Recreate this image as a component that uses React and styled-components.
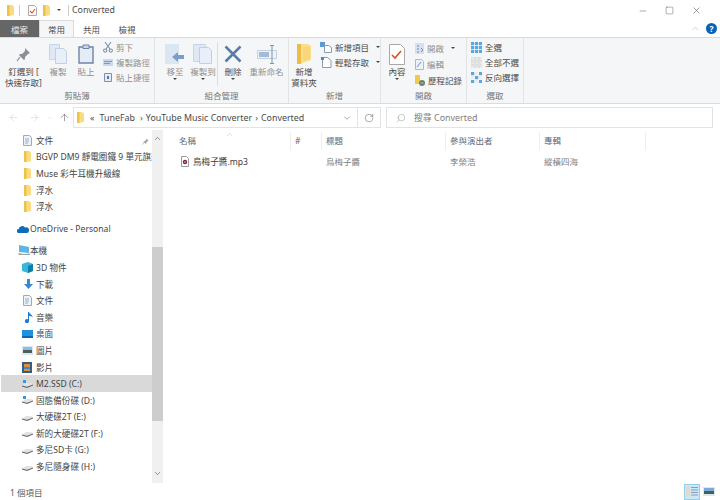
import React from 'react';
import styled, { createGlobalStyle } from 'styled-components';
import { ArrowLeft, ArrowRight, ArrowUp, ChevronDown, ChevronUp, Minus, RotateCw, Search, Square, X } from 'lucide-react';

const GlobalStyle = createGlobalStyle`
  html, body {
    margin: 0;
    width: 720px;
    height: 500px;
    overflow: hidden;
    background: #fff;
    font-family: "Noto Sans", "Noto Sans CJK TC", sans-serif;
    font-size: 9px;
    color: #333;
  }
  * { box-sizing: border-box; }
  svg { flex-shrink: 0; }
`;

const Window = styled.div`
  width: 720px;
  height: 500px;
  display: flex;
  flex-direction: column;
`;

const TitleBar = styled.div`
  height: 20px;
  display: flex;
  align-items: center;
  padding-left: 7px;
`;

const Sep = styled.span`
  width: 1px;
  height: 11px;
  background: #ccc;
  margin: 0 ${(p) => p.$r}px 0 ${(p) => p.$l}px;
`;

const QuickSlot = styled.span`
  display: flex;
  margin-left: ${(p) => p.$ml || 0}px;
`;

const TitleText = styled.span`
  font-size: 8.8px;
  color: #4a4a4a;
`;

const WinButtons = styled.div`
  margin-left: auto;
  display: flex;
  align-items: center;
  gap: 17px;
  padding-right: 18px;
  padding-top: 1px;
  color: #333;
`;

const TabBar = styled.div`
  height: 17px;
  display: flex;
  align-items: stretch;
  position: relative;
  z-index: 1;
`;

const Tab = styled.div`
  width: ${(p) => p.$w}px;
  display: flex;
  align-items: center;
  justify-content: center;
  font-size: 8.5px;
  color: ${(p) => (p.$file ? '#e8e8e8' : '#4a4a4a')};
  background: ${(p) => (p.$file ? '#666' : p.$active ? '#f5f6f7' : 'transparent')};
  border: ${(p) => (p.$active ? '1px solid #dadbdc' : 'none')};
  border-bottom: none;
`;

const TabRight = styled.div`
  margin-left: auto;
  display: flex;
  align-items: center;
  gap: 5px;
  padding-right: 3px;
  color: #999;
`;

const HelpBadge = styled.span`
  width: 11px;
  height: 11px;
  border-radius: 50%;
  background: #0a62b8;
  color: #fff;
  font-size: 8.5px;
  font-weight: 700;
  line-height: 11px;
  text-align: center;
`;

const Ribbon = styled.div`
  height: 67px;
  background: #f5f6f7;
  border-top: 1px solid #dadbdc;
  border-bottom: 1px solid #dadbdc;
  display: flex;
`;

const Group = styled.div`
  width: ${(p) => p.$w}px;
  border-right: ${(p) => (p.$last ? 'none' : '1px solid #e2e3e4')};
  display: flex;
  flex-direction: column;
`;

const GroupBody = styled.div`
  height: 52px;
  display: flex;
  padding-left: ${(p) => p.$pl || 0}px;
`;

const GroupLabel = styled.div`
  text-align: center;
  color: #777;
  font-size: 8.5px;
  line-height: 14px;
`;

const BigButton = styled.div`
  width: ${(p) => p.$w}px;
  padding-top: 4px;
  display: flex;
  flex-direction: column;
  align-items: center;
  text-align: center;
  line-height: 11px;
  font-size: 8.5px;
  color: ${(p) => (p.$off ? '#909090' : '#4a4a4a')};
  white-space: nowrap;
`;

const BigIcon = styled.div`
  height: 24px;
  display: flex;
  align-items: center;
`;

const Caret = styled.span`
  display: block;
  width: 0;
  height: 0;
  border-left: 2px solid transparent;
  border-right: 2px solid transparent;
  border-top: 2px solid #444;
  margin: ${(p) => (p.$inline ? `0 0 0 ${p.$ml || 4}px` : '1px auto 0')};
`;

const SmallStack = styled.div`
  display: flex;
  flex-direction: column;
  gap: ${(p) => p.$gap || 3}px;
  padding-top: ${(p) => p.$pt || 3}px;
  margin-left: ${(p) => p.$ml || 0}px;
`;

const SmallButton = styled.div`
  height: 12px;
  display: flex;
  align-items: center;
  gap: 3px;
  font-size: 8.5px;
  color: ${(p) => (p.$off ? '#909090' : '#4a4a4a')};
  white-space: nowrap;
`;

const VRule = styled.span`
  width: 1px;
  height: 44px;
  margin-top: 4px;
  background: #dcdddf;
`;

const AddressRow = styled.div`
  height: 26px;
  display: flex;
  align-items: center;
  padding: 1px 7px 0 0;
`;

const NavArrows = styled.div`
  width: 73px;
  display: flex;
  align-items: center;
  padding-left: 8px;
  color: #c4c4c4;
`;

const NavArrow = styled.span`
  display: flex;
  margin-left: ${(p) => p.$ml || 0}px;
  color: ${(p) => (p.$on ? '#555' : 'inherit')};
`;

const AddressBox = styled.div`
  width: 308px;
  height: 21px;
  border: 1px solid #e3e3e3;
  display: flex;
  align-items: center;
  padding-left: 3px;
  color: #4a4a4a;
  font-size: 8.9px;
`;

const Crumb = styled.span`
  margin-left: ${(p) => p.$ml || 5}px;
  white-space: nowrap;
`;

const CrumbEnd = styled.div`
  margin-left: auto;
  display: flex;
  align-items: center;
  height: 100%;
  color: #555;
`;

const RefreshCell = styled.div`
  width: 23px;
  height: 100%;
  margin-left: 5px;
  border-left: 1px solid #e3e3e3;
  display: flex;
  align-items: center;
  justify-content: center;
`;

const SearchBox = styled.div`
  margin-left: 5px;
  flex: 1;
  height: 21px;
  border: 1px solid #e3e3e3;
  display: flex;
  align-items: center;
  gap: 8px;
  padding-left: 9px;
  color: #808080;
  font-size: 8.9px;
`;

const MirroredSearch = styled(Search)`
  transform: scaleX(-1);
`;

const Main = styled.div`
  height: 353px;
  display: flex;
`;

const NavPane = styled.div`
  width: 152px;
  padding-top: 2px;
  overflow: hidden;
`;

const NavRow = styled.div`
  height: 16.6px;
  margin-left: 1px;
  display: flex;
  align-items: center;
  padding-left: ${(p) => p.$pl}px;
  background: ${(p) => (p.$selected ? '#d9d9d9' : 'transparent')};
  margin-top: ${(p) => p.$mt || 0}px;
  color: #444;
  font-size: 8.6px;
  white-space: nowrap;
  position: relative;
`;

const NavIconSlot = styled.span`
  width: ${(p) => p.$w}px;
  flex-shrink: 0;
  display: flex;
  align-items: center;
  padding-left: ${(p) => p.$in || 0}px;
`;

const NavPin = styled.span`
  position: absolute;
  right: 3px;
  top: 4px;
`;

const Scrollbar = styled.div`
  width: 11px;
  background: #f0f0f0;
  display: flex;
  flex-direction: column;
  align-items: center;
  color: #505050;
  padding-top: 4px;
`;

const Thumb = styled.div`
  width: 100%;
  height: 174px;
  margin-top: 104px;
  background: #cdcdcd;
`;

const ScrollEnd = styled.div`
  margin-top: auto;
  padding-bottom: 2px;
`;

const Files = styled.div`
  flex: 1;
  padding-top: 2px;
  padding-left: 11px;
`;

const HeaderRow = styled.div`
  display: grid;
  grid-template-columns: 117px 31px 124px 94px 106px;
  height: 18px;
  position: relative;
`;

const HeaderCell = styled.div`
  border-right: 1px solid #eeeeee;
  padding-left: ${(p) => (p.$first ? 5 : 4)}px;
  color: #5f6b7a;
  font-size: 8.5px;
  line-height: 17px;
`;

const SortArrow = styled.span`
  position: absolute;
  left: 51px;
  top: -3px;
  color: #a8a8a8;
`;

const FileRow = styled.div`
  display: grid;
  grid-template-columns: 117px 31px 124px 94px 106px;
  margin-top: 3px;
  height: 16px;
  align-items: center;
  font-size: 8.5px;
  color: #808080;
`;

const FileName = styled.div`
  display: flex;
  align-items: center;
  gap: 4px;
  padding-left: 7px;
  color: #3c3c3c;
  font-size: 8.6px;
`;

const FileCell = styled.div`
  padding-left: 4px;
`;

const StatusBar = styled.div`
  flex: 1;
  display: flex;
  align-items: center;
  padding-left: 10px;
  color: #5a5a5a;
  font-size: 8.5px;
`;

const ViewSwitch = styled.div`
  margin-left: auto;
  display: flex;
  align-items: center;
  gap: 2px;
  padding-right: 5px;
`;

const ViewBtn = styled.span`
  width: ${(p) => p.$w}px;
  height: ${(p) => p.$h}px;
  display: flex;
  align-items: center;
  justify-content: center;
  background: ${(p) => (p.$on ? '#cce8f7' : 'transparent')};
  border: ${(p) => (p.$on ? '1px solid #8fd0ee' : 'none')};
`;

const Folder = ({ w = 7, h = 11 }) => (
  <svg width={w} height={h} viewBox="0 0 7 11" preserveAspectRatio="none">
    <path d="M0 0h5l2 1.500V10l-5 1H0z" fill="#f9dc82" />
    <path d="M0 0h2.500v11H0z" fill="#f0c04c" />
  </svg>
);

const BigFolder = () => (
  <svg width="14" height="20" viewBox="0 0 14 20">
    <path d="M0 0h11l3 2v14l-11 4H0z" fill="#fbe08c" />
    <path d="M0 0h4v20H0z" fill="#eebc46" />
    <path d="M6 3l7-1v13l-7 2z" fill="#f9d778" />
  </svg>
);

const Pin = () => (
  <svg width="15" height="15" viewBox="0 0 15 15">
    <path d="M9 1l5 5-2 1-3 3v2l-1 1-5-5 1-1h2l3-3z" fill="#8a8f96" />
    <path d="M4 10l-3 4" stroke="#8a8f96" strokeWidth="1.200" />
  </svg>
);

const TinyPin = () => (
  <svg width="7" height="7" viewBox="0 0 15 15">
    <path d="M9 1l5 5-2 1-3 3v2l-1 1-5-5 1-1h2l3-3z" fill="#a0a0a0" />
    <path d="M4 10l-3 4" stroke="#a0a0a0" strokeWidth="1.600" />
  </svg>
);

const CopyPages = () => (
  <svg width="18" height="20" viewBox="0 0 18 20">
    <path d="M.5.500h10v15H.5z" fill="#dfe8f4" stroke="#c6d5e8" />
    <path d="M6.500 4.500h8l3 3v12h-11z" fill="#e8eff8" stroke="#c0cfe2" />
  </svg>
);

const Clipboard = () => (
  <svg width="16" height="20" viewBox="0 0 16 20">
    <path d="M1 3h14v16H1z" fill="#e4ecf6" stroke="#6f84a8" strokeWidth="1.400" />
    <path d="M5 1h6v3.500H5z" fill="#c9d6e8" stroke="#6f84a8" />
  </svg>
);

const Scissors = () => (
  <svg width="10" height="11" viewBox="0 0 10 11" fill="none" stroke="#7f91ad" strokeWidth="1.100">
    <path d="M2 0l5 7M8 0L3 7" />
    <circle cx="2.200" cy="8.600" r="1.600" />
    <circle cx="7.800" cy="8.600" r="1.600" />
  </svg>
);

const PathIcon = () => (
  <svg width="10" height="7" viewBox="0 0 10 7">
    <path d="M0 0h10v7H0z" fill="#c9d8ec" />
    <path d="M1 2.500h8M1 4.500h6" stroke="#6f84a8" strokeWidth=".8" />
  </svg>
);

const ShortcutIcon = () => (
  <svg width="10" height="10" viewBox="0 0 10 10">
    <path d="M1.500 1.500h7v8h-7z" fill="#e4ecf6" stroke="#7f91ad" />
    <path d="M4 4h2v3H4z" fill="#4f78b0" />
  </svg>
);

const MoveTo = () => (
  <svg width="20" height="20" viewBox="0 0 20 20">
    <path d="M0 0h14v20H0z" fill="#dbe6f3" />
    <path d="M7 13l6-5v3h6v4h-6v3z" fill="#7c9fc9" />
  </svg>
);

const CopyTo = () => (
  <svg width="20" height="20" viewBox="0 0 20 20">
    <path d="M.5.500h12v17H.5z" fill="#dfe8f4" stroke="#c6d5e8" />
    <path d="M6.500 3.500h9l3 3v13h-12z" fill="#e8eff8" stroke="#c0cfe2" />
  </svg>
);

const DeleteX = () => (
  <svg width="18" height="18" viewBox="0 0 18 18">
    <path d="M1.500 1.500l15 15M16.500 1.500l-15 15" stroke="#5c7ba6" strokeWidth="2.600" />
  </svg>
);

const Rename = () => (
  <svg width="20" height="19" viewBox="0 0 20 19">
    <path d="M.5 5.500h19v8H.5z" fill="#eef3f9" stroke="#c3d0e0" />
    <path d="M2 7h10v5H2z" fill="#a5bad6" />
    <path d="M13 .5h4M15 .5v18M13 18.500h4" stroke="#7f91ad" fill="none" />
  </svg>
);

const NewItem = () => (
  <svg width="12" height="11" viewBox="0 0 12 11">
    <path d="M0 0h5v5H0z" fill="#5b9bd5" />
    <path d="M4.500 3.500h4l3 2v5h-7z" fill="#fff" stroke="#8a9bb2" />
  </svg>
);

const QuickAccess = () => (
  <svg width="12" height="12" viewBox="0 0 12 12">
    <path d="M2.500 1.500h5l3.500 3v7H2.500z" fill="#fff" stroke="#8a9bb2" />
    <path d="M1 1h3v3H1z" fill="#3f8fd0" />
  </svg>
);

const Properties = () => (
  <svg width="16" height="21" viewBox="0 0 16 21">
    <path d="M.5.500h11l4 4v16H.5z" fill="#fff" stroke="#a9a9a9" />
    <path d="M3 11l3 3 6-7" stroke="#d9531e" strokeWidth="1.600" fill="none" />
  </svg>
);

const SmallProperties = () => (
  <svg width="9" height="11" viewBox="0 0 9 11">
    <path d="M.5.500h6l2 2v8h-8z" fill="#fff" stroke="#a9a9a9" />
    <path d="M2 6l2 2 3-4" stroke="#d9531e" strokeWidth="1.100" fill="none" />
  </svg>
);

const OpenIcon = () => (
  <svg width="9" height="11" viewBox="0 0 9 11">
    <path d="M0 0h9v11H0z" fill="#d6e0ee" />
    <path d="M2 3h2M2 6h2M2 9h2M6 5l2 2-2 2" stroke="#6f84a8" strokeWidth=".9" fill="none" />
  </svg>
);

const EditIcon = () => (
  <svg width="9" height="11" viewBox="0 0 9 11">
    <path d="M.5.500h6l2 2v8h-8z" fill="#eef3f9" stroke="#a5bad6" />
    <path d="M2 8l4-5" stroke="#7c9fc9" strokeWidth="1.200" />
  </svg>
);

const HistoryIcon = () => (
  <svg width="10" height="11" viewBox="0 0 10 11">
    <path d="M0 0h5v9H0z" fill="#f2c94c" />
    <circle cx="7" cy="8" r="3" fill="#6f7f73" />
    <path d="M5.500 8h3" stroke="#9fd27a" />
  </svg>
);

const SelectAll = ({ tone = 'all' }) => {
  const cells = [
    [0, 0], [4, 0], [8, 0], [0, 4], [4, 4], [8, 4], [0, 8], [4, 8], [8, 8],
  ];
  const color = (i) => {
    if (tone === 'all') return '#5aa7e0';
    if (tone === 'none') return '#e9e9e9';
    return i % 2 ? '#eaeef3' : '#5aa7e0';
  };
  return (
    <svg width="11" height="11" viewBox="0 0 11 11">
      {cells.map(([x, y], i) => (
        <rect key={i} x={x} y={y} width="3.200" height="3.200" fill={color(i)} stroke={tone === 'none' ? '#c8c8c8' : 'none'} strokeWidth=".4" />
      ))}
    </svg>
  );
};

const DocIcon = () => (
  <svg width="9" height="11" viewBox="0 0 9 11">
    <path d="M.5.500h6l2 2v8h-8z" fill="#eef2f6" stroke="#9eaab8" />
    <path d="M2 4h4M2 6h4M2 8h3" stroke="#6fa4d0" strokeWidth=".8" />
  </svg>
);

const OneDriveIcon = () => (
  <svg width="12" height="8" viewBox="0 0 12 8">
    <path d="M2 8a2 2 0 0 1-.3-4A3.500 3.500 0 0 1 8 2.500 2.800 2.800 0 0 1 12 5.500 2.500 2.500 0 0 1 10 8z" fill="#0f6cbd" />
  </svg>
);

const PcIcon = () => (
  <svg width="12" height="11" viewBox="0 0 12 11">
    <path d="M1 0l10 2v6L1 7z" fill="#5fb4e6" />
    <path d="M0 8l6 1 6-.500v1.500H1z" fill="#9aa5ae" />
  </svg>
);

const ObjectsIcon = () => (
  <svg width="11" height="11" viewBox="0 0 11 11">
    <path d="M0 2l6-2 5 2v7l-5 2-6-2z" fill="#39b7d8" />
    <path d="M6 4l5-2v7l-5 2z" fill="#0e7fa8" />
  </svg>
);

const DownloadIcon = () => (
  <svg width="9" height="10" viewBox="0 0 9 10">
    <path d="M3 0h3v5h3L4.500 10 0 5h3z" fill="#3f86d2" />
  </svg>
);

const MusicIcon = () => (
  <svg width="8" height="11" viewBox="0 0 8 11">
    <path d="M3 0h1c.3 2 4 3 3.500 5.500C7 4.500 5.500 4 4 3.800V9a2 2 0 1 1-1-1.700z" fill="#1a7bd0" />
  </svg>
);

const DesktopIcon = () => (
  <svg width="11" height="8" viewBox="0 0 11 8">
    <path d="M0 0h11v8H0z" fill="#1f8fe0" />
    <path d="M0 6h11v2H0z" fill="#0b66b4" />
  </svg>
);

const PictureIcon = () => (
  <svg width="11" height="9" viewBox="0 0 11 9">
    <path d="M0 0h11v9H0z" fill="#dbe7f2" />
    <path d="M1 1h9v3H1z" fill="#8dbce0" />
    <path d="M1 4h9v3H1z" fill="#4c5f55" />
  </svg>
);

const VideoIcon = () => (
  <svg width="10" height="11" viewBox="0 0 10 11">
    <path d="M0 0h10v11H0z" fill="#3c5d7c" />
    <path d="M2 2h6v7H2z" fill="#d8913c" />
    <path d="M2 5h6v2H2z" fill="#3f86d2" />
  </svg>
);

const DriveIcon = ({ win }) => (
  <svg width="11" height="8" viewBox="0 0 11 8">
    <path d="M0 5.500L4 3h5l2 1.500L5 6.500z" fill="#dfe3e6" />
    <path d="M0 5.500l5 1.200 6-2.200v1L5 8 0 6.500z" fill="#5f6569" />
    {win && <path d="M1 0h3v3H1z" fill="#2f9ae0" />}
  </svg>
);

const AudioFile = () => (
  <svg width="8" height="11" viewBox="0 0 8 11">
    <path d="M.5.500h5l2 2v8h-7z" fill="#fff" stroke="#9a9a9a" />
    <circle cx="4" cy="6" r="2.200" fill="#7a2340" />
    <circle cx="4" cy="6" r=".700" fill="#fff" />
  </svg>
);

const ListView = () => (
  <svg width="12" height="11" viewBox="0 0 12 11">
    <path d="M0 0h4v11H0z" fill="#e6d9cc" />
    <path d="M5 1.500h7M5 4h7M5 6.500h7M5 9h7" stroke="#7f95ad" strokeWidth=".9" />
  </svg>
);

const ThumbView = () => (
  <svg width="12" height="9" viewBox="0 0 12 9">
    <path d="M0 0h12v9H0z" fill="#dfe6ec" />
    <path d="M1 1h10v3H1z" fill="#7aa9dc" />
    <path d="M1 4h10v3H1z" fill="#3e6256" />
  </svg>
);

const NAV_ITEMS = [
  { label: '文件', icon: <DocIcon />, inset: 1, pin: true },
  { label: 'BGVP DM9 靜電圈鐵 9 單元旗艦', icon: <Folder />, inset: 2 },
  { label: 'Muse 彩牛耳機升級線', icon: <Folder />, inset: 2 },
  { label: '浮水', icon: <Folder />, inset: 2 },
  { label: '浮水', icon: <Folder />, inset: 2 },
  { label: 'OneDrive - Personal', icon: <OneDriveIcon />, pl: 16, slot: 13, mt: 5.500 },
  { label: '本機', icon: <PcIcon />, pl: 16, slot: 13, inset: 1, mt: 5.500 },
  { label: '3D 物件', icon: <ObjectsIcon /> },
  { label: '下載', icon: <DownloadIcon />, inset: 2 },
  { label: '文件', icon: <DocIcon />, inset: 1 },
  { label: '音樂', icon: <MusicIcon />, inset: 3 },
  { label: '桌面', icon: <DesktopIcon /> },
  { label: '圖片', icon: <PictureIcon /> },
  { label: '影片', icon: <VideoIcon /> },
  { label: 'M2.SSD (C:)', icon: <DriveIcon win />, selected: true },
  { label: '固態備份碟 (D:)', icon: <DriveIcon win /> },
  { label: '大硬碟2T (E:)', icon: <DriveIcon /> },
  { label: '新的大硬碟2T (F:)', icon: <DriveIcon /> },
  { label: '多尼SD卡 (G:)', icon: <DriveIcon /> },
  { label: '多尼隨身碟 (H:)', icon: <DriveIcon /> },
];

export default function App() {
  return (
    <Window>
      <GlobalStyle />
      <TitleBar>
        <Folder />
        <Sep $l={5} $r={8} />
        <SmallProperties />
        <QuickSlot $ml={6}><Folder /></QuickSlot>
        <Caret $inline $ml={7} />
        <Sep $l={7} $r={3} />
        <TitleText>Converted</TitleText>
        <WinButtons>
          <Minus size={10} strokeWidth={1} />
          <Square size={9} strokeWidth={1} />
          <X size={11} strokeWidth={1} />
        </WinButtons>
      </TitleBar>

      <TabBar>
        <Tab $file $w={39}>檔案</Tab>
        <Tab $active $w={35}>常用</Tab>
        <Tab $w={35}>共用</Tab>
        <Tab $w={36}>檢視</Tab>
        <TabRight>
          <ChevronUp size={11} strokeWidth={1} />
          <HelpBadge>?</HelpBadge>
        </TabRight>
      </TabBar>

      <Ribbon>
        <Group $w={155}>
          <GroupBody $pl={3}>
            <BigButton $w={41}>
              <BigIcon><Pin /></BigIcon>
              <span>釘選到 [</span>
              <span>快速存取]</span>
            </BigButton>
            <BigButton $w={28} $off>
              <BigIcon><CopyPages /></BigIcon>
              <span>複製</span>
            </BigButton>
            <BigButton $w={28} $off>
              <BigIcon><Clipboard /></BigIcon>
              <span>貼上</span>
            </BigButton>
            <SmallStack $ml={3}>
              <SmallButton $off><Scissors /><span>剪下</span></SmallButton>
              <SmallButton $off><PathIcon /><span>複製路徑</span></SmallButton>
              <SmallButton $off><ShortcutIcon /><span>貼上捷徑</span></SmallButton>
            </SmallStack>
          </GroupBody>
          <GroupLabel>剪貼簿</GroupLabel>
        </Group>

        <Group $w={134}>
          <GroupBody $pl={6}>
            <BigButton $w={28} $off>
              <BigIcon><MoveTo /></BigIcon>
              <span>移至</span>
              <Caret />
            </BigButton>
            <BigButton $w={28} $off>
              <BigIcon><CopyTo /></BigIcon>
              <span>複製到</span>
              <Caret />
            </BigButton>
            <VRule />
            <BigButton $w={30}>
              <BigIcon><DeleteX /></BigIcon>
              <span>刪除</span>
              <Caret />
            </BigButton>
            <BigButton $w={37} $off>
              <BigIcon><Rename /></BigIcon>
              <span>重新命名</span>
            </BigButton>
          </GroupBody>
          <GroupLabel>組合管理</GroupLabel>
        </Group>

        <Group $w={92}>
          <GroupBody $pl={2}>
            <BigButton $w={30}>
              <BigIcon><BigFolder /></BigIcon>
              <span>新增</span>
              <span>資料夾</span>
            </BigButton>
            <SmallStack $ml={3} $gap={3}>
              <SmallButton><NewItem /><span>新增項目</span><Caret $inline /></SmallButton>
              <SmallButton><QuickAccess /><span>輕鬆存取</span><Caret $inline /></SmallButton>
            </SmallStack>
          </GroupBody>
          <GroupLabel>新增</GroupLabel>
        </Group>

        <Group $w={86}>
          <GroupBody $pl={3}>
            <BigButton $w={26}>
              <BigIcon><Properties /></BigIcon>
              <span>內容</span>
              <Caret />
            </BigButton>
            <SmallStack $ml={5} $gap={4} $pt={4}>
              <SmallButton $off><OpenIcon /><span>開啟</span><Caret $inline /></SmallButton>
              <SmallButton $off><EditIcon /><span>編輯</span></SmallButton>
              <SmallButton><HistoryIcon /><span>歷程記錄</span></SmallButton>
            </SmallStack>
          </GroupBody>
          <GroupLabel>開啟</GroupLabel>
        </Group>

        <Group $w={57}>
          <GroupBody $pl={4}>
            <SmallStack>
              <SmallButton><SelectAll /><span>全選</span></SmallButton>
              <SmallButton><SelectAll tone="none" /><span>全部不選</span></SmallButton>
              <SmallButton><SelectAll tone="mixed" /><span>反向選擇</span></SmallButton>
            </SmallStack>
          </GroupBody>
          <GroupLabel>選取</GroupLabel>
        </Group>
        <Group $w={196} $last />
      </Ribbon>

      <AddressRow>
        <NavArrows>
          <NavArrow><ArrowLeft size={11} strokeWidth={1} /></NavArrow>
          <NavArrow $ml={10}><ArrowRight size={11} strokeWidth={1} /></NavArrow>
          <NavArrow $ml={6}><ChevronDown size={8} strokeWidth={1} /></NavArrow>
          <NavArrow $ml={5} $on><ArrowUp size={11} strokeWidth={1.2} /></NavArrow>
        </NavArrows>
        <AddressBox>
          <Folder />
          <Crumb $ml={6}>«</Crumb>
          <Crumb $ml={5}>TuneFab</Crumb>
          <Crumb $ml={5}>›</Crumb>
          <Crumb $ml={3}>YouTube Music Converter</Crumb>
          <Crumb $ml={3}>›</Crumb>
          <Crumb $ml={3}>Converted</Crumb>
          <CrumbEnd>
            <ChevronDown size={10} strokeWidth={1.2} />
            <RefreshCell><RotateCw size={10} strokeWidth={1.2} /></RefreshCell>
          </CrumbEnd>
        </AddressBox>
        <SearchBox>
          <MirroredSearch size={10} strokeWidth={1} />
          <span>搜尋 Converted</span>
        </SearchBox>
      </AddressRow>

      <Main>
        <NavPane>
          {NAV_ITEMS.map((item, i) => (
            <NavRow key={i} $pl={item.pl ?? 21} $mt={item.mt} $selected={item.selected}>
              <NavIconSlot $w={item.slot ?? 14} $in={item.inset}>{item.icon}</NavIconSlot>
              <span>{item.label}</span>
              {item.pin && <NavPin><TinyPin /></NavPin>}
            </NavRow>
          ))}
        </NavPane>
        <Scrollbar>
          <ChevronUp size={9} strokeWidth={1.6} />
          <Thumb />
          <ScrollEnd><ChevronDown size={9} strokeWidth={1.6} /></ScrollEnd>
        </Scrollbar>
        <Files>
          <HeaderRow>
            <SortArrow><ChevronUp size={9} strokeWidth={1} /></SortArrow>
            <HeaderCell $first>名稱</HeaderCell>
            <HeaderCell>#</HeaderCell>
            <HeaderCell>標題</HeaderCell>
            <HeaderCell>參與演出者</HeaderCell>
            <HeaderCell>專輯</HeaderCell>
          </HeaderRow>
          <FileRow>
            <FileName><AudioFile /><span>烏梅子醬.mp3</span></FileName>
            <FileCell />
            <FileCell>烏梅子醬</FileCell>
            <FileCell>李榮浩</FileCell>
            <FileCell>縱橫四海</FileCell>
          </FileRow>
        </Files>
      </Main>

      <StatusBar>
        <span>1 個項目</span>
        <ViewSwitch>
          <ViewBtn $on $w={16} $h={16}><ListView /></ViewBtn>
          <ViewBtn $w={13} $h={11}><ThumbView /></ViewBtn>
        </ViewSwitch>
      </StatusBar>
    </Window>
  );
}
